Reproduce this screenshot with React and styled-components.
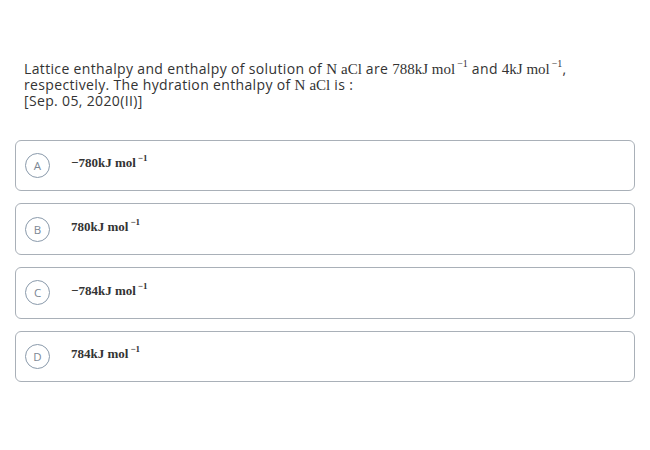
import React from 'react'
import styled, { createGlobalStyle } from 'styled-components'

const GlobalStyle = createGlobalStyle`
  html, body {
    margin: 0;
    padding: 0;
    background: #ffffff;
  }
  body {
    font-family: "Open Sans", "Noto Sans", sans-serif;
    color: #333;
  }
`

const options = [
  { label: 'A', value: '−780' },
  { label: 'B', value: '780' },
  { label: 'C', value: '−784' },
  { label: 'D', value: '784' },
]

const App = () => {
  return (
    <Page>
      <GlobalStyle />
      <Question>
        Lattice enthalpy and enthalpy of solution of <Math>N</Math> <Math>aCl</Math>
        {' '}are <Unit value="788" /> and <Unit value="4" />,
        <br />
        respectively. The hydration enthalpy of <Math>N</Math> <Math>aCl</Math> is :
        <br />
        [Sep. 05, 2020(II)]
      </Question>
      <OptionList>
        {options.map(opt => (
          <OptionCard key={opt.label}>
            <Badge>{opt.label}</Badge>
            <Answer>
              {opt.value}kJ mol<Sup>−1</Sup>
            </Answer>
          </OptionCard>
        ))}
      </OptionList>
    </Page>
  )
}

const Unit = ({ value }) => (
  <Math>
    {value}kJ mol<MathSup>−1</MathSup>
  </Math>
)

export default App

const Page = styled.div`
  width: 650px;
  height: 450px;
  box-sizing: border-box;
  padding: 61px 15px 0 15px;
`

const Question = styled.div`
  padding-left: 9px;
  font-size: 14px;
  letter-spacing: 0.35px;
  line-height: 15.5px;
  color: #333;
`

const Math = styled.span`
  font-family: "Liberation Serif", "Times New Roman", serif;
  font-size: 15px;
  letter-spacing: 0;
  line-height: 15px;
`

const MathSup = styled.sup`
  font-size: 10px;
  vertical-align: 7px;
  line-height: 0;
  margin-left: 2px;
`

const OptionList = styled.div`
  margin-top: 31px;
  display: flex;
  flex-direction: column;
  gap: 12px;
  width: 620px;
`

const OptionCard = styled.div`
  height: 51.7px;
  box-sizing: border-box;
  border: 1.5px solid #a9b0b8;
  border-radius: 6px;
  display: flex;
  align-items: center;
  padding-left: 9px;
`

const Badge = styled.div`
  width: 25px;
  height: 25px;
  box-sizing: border-box;
  border: 1.2px solid #8a9aab;
  border-radius: 50%;
  display: flex;
  align-items: center;
  justify-content: center;
  font-size: 11.5px;
  color: #7b8794;
  margin-right: 21px;
`

const Answer = styled.div`
  font-family: "Liberation Serif", "Times New Roman", serif;
  font-weight: bold;
  font-size: 13px;
  color: #333;
  margin-top: -4px;
`

const Sup = styled.sup`
  font-size: 9px;
  vertical-align: 6px;
  line-height: 0;
  margin-left: 2px;
`
